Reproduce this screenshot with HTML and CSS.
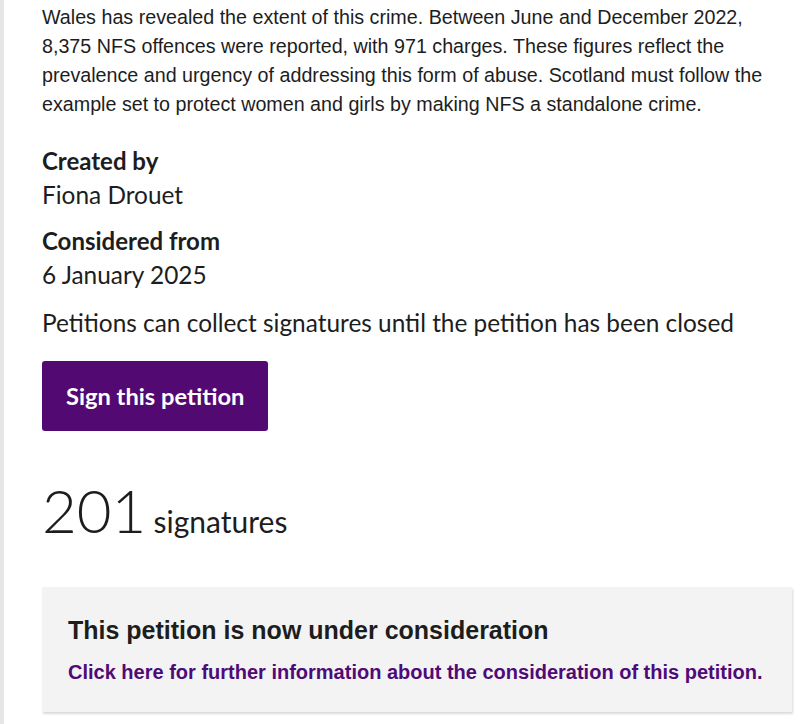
FILE: index.html
```html
<!DOCTYPE html>
<html lang="en">
<head>
    <meta charset="UTF-8">
    <meta name="viewport" content="width=device-width, initial-scale=1.0">
    <title>Petition - Non-fatal strangulation</title>
    <link rel="stylesheet" href="styles.css">
</head>
<body>
    <div class="page">
        <main class="petition">
            <p class="summary">Wales has revealed the extent of this crime. Between June and December 2022, 8,375 NFS offences were reported, with 971 charges. These figures reflect the prevalence and urgency of addressing this form of abuse. Scotland must follow the example set to protect women and girls by making NFS a standalone crime.</p>

            <dl class="meta">
                <dt>Created by</dt>
                <dd>Fiona Drouet</dd>
                <dt>Considered from</dt>
                <dd>6 January 2025</dd>
            </dl>

            <p class="note">Petitions can collect signatures until the petition has been closed</p>

            <a href="#" class="sign-button">Sign this petition</a>

            <p class="count"><span class="count-number">201</span> <span class="count-label">signatures</span></p>

            <div class="status-box">
                <h2>This petition is now under consideration</h2>
                <a href="#">Click here for further information about the consideration of this petition.</a>
            </div>
        </main>
    </div>
</body>
</html>
```

FILE: styles.css
```css
body {
    margin: 0;
    background-color: #fff;
    color: #1d1d1d;
    font-family: "Liberation Sans", Arial, sans-serif;
}
.page {
    border-left: 4px solid #e6e6e6;
    min-height: 100vh;
    box-sizing: border-box;
}
.petition {
    padding: 3px 11px 0 38px;
}
.summary {
    margin: 0;
    font-size: 19.7px;
    line-height: 29px;
}
.meta {
    margin: 27px 0 0;
    font-family: Lato, sans-serif;
}
.meta dt {
    font-size: 24px;
    font-weight: bold;
    line-height: 30px;
}
.meta dd {
    margin: 2px 0 14px;
    font-size: 24.4px;
    line-height: 34px;
}
.note {
    margin: 3px 0 0;
    font-family: Lato, sans-serif;
    font-size: 24.4px;
    line-height: 34px;
}
.sign-button {
    display: inline-block;
    margin-top: 21px;
    padding: 0 24px;
    height: 70px;
    line-height: 70px;
    background-color: #520a72;
    color: #fff;
    font-family: Lato, sans-serif;
    font-size: 23.7px;
    font-weight: bold;
    text-decoration: none;
    border-radius: 3px;
}
.count {
    margin: 44px 0 0;
    font-family: Lato, sans-serif;
    line-height: 70px;
}
.count-number {
    font-size: 60px;
    font-weight: 300;
}
.count-label {
    margin-left: 3px;
    font-size: 30px;
}
.status-box {
    margin-top: 25px;
    padding: 27px 26px 26px;
    background-color: #f3f3f3;
    box-shadow: 1px 2px 2px rgba(0, 0, 0, 0.15);
}
.status-box h2 {
    margin: 0 0 12px;
    font-size: 25px;
    line-height: 32px;
}
.status-box a {
    display: block;
    color: #4f0a78;
    font-size: 20px;
    font-weight: bold;
    text-decoration: none;
    line-height: 28px;
}
```
